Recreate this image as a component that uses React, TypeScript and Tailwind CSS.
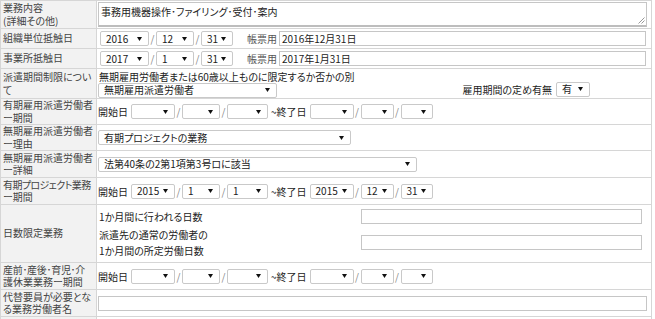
import React from "react";

type SelProps = { value?: string; w: string };

function Arrow() {
  return (
    <svg width="5" height="4" viewBox="0 0 5 4" className="shrink-0">
      <polygon points="0,0 5,0 2.5,4" fill="#111" />
    </svg>
  );
}

function Sel({ value = "", w }: SelProps) {
  return (
    <span
      className={`inline-flex h-[15px] shrink-0 items-center justify-between rounded-[2px] border border-[#c9c9c9] bg-white pl-[5px] pr-[6px] text-[10px] leading-none text-[#222] ${w}`}
    >
      <span className="whitespace-nowrap">{value}</span>
      <Arrow />
    </span>
  );
}

function Slash() {
  return <span className="w-[7px] shrink-0 text-center text-[10px] text-[#888]">/</span>;
}

function Field({ value = "", w }: { value?: string; w: string }) {
  return (
    <span
      className={`flex h-[15px] items-center border border-[#c6c6c6] bg-white pl-[2px] text-[10px] leading-none text-[#222] ${w}`}
    >
      {value}
    </span>
  );
}

function Range({ from = ["", "", ""], to = ["", "", ""] }: { from?: string[]; to?: string[] }) {
  return (
    <div className="flex items-center">
      <span className="mr-[3px] whitespace-nowrap">開始日</span>
      <Sel value={from[0]} w="w-[44px]" />
      <Slash />
      <Sel value={from[1]} w="w-[38px]" />
      <Slash />
      <Sel value={from[2]} w="w-[41px]" />
      <span className="mx-[3px] whitespace-nowrap">~終了日</span>
      <Sel value={to[0]} w="w-[44px]" />
      <Slash />
      <Sel value={to[1]} w="w-[33px]" />
      <Slash />
      <Sel value={to[2]} w="w-[32px]" />
    </div>
  );
}

function DateRow({ y, m, d, text }: { y: string; m: string; d: string; text: string }) {
  return (
    <div className="flex items-center pl-[2px]">
      <Sel value={y} w="w-[49px]" />
      <Slash />
      <Sel value={m} w="w-[38px]" />
      <Slash />
      <Sel value={d} w="w-[32px]" />
      <span className="ml-[14px] mr-[2px] whitespace-nowrap text-[#555]">帳票用</span>
      <Field value={text} w="w-[367px]" />
    </div>
  );
}

const label =
  "whitespace-nowrap border border-[#d6d6d6] bg-[#f2f2f2] px-[2px] align-middle leading-[12.5px] text-[#444]";
const cell = "border border-[#d6d6d6] bg-white pl-[1px] align-middle";

export default function App() {
  return (
    <div className="h-[319px] overflow-hidden bg-white font-['Noto_Sans_CJK_JP','Noto_Sans',sans-serif] text-[10px] leading-[13px] text-[#222] [font-feature-settings:'palt']">
      <table className="w-[652px] table-fixed border-collapse">
        <colgroup>
          <col className="w-[96px]" />
          <col />
        </colgroup>
        <tbody>
          <tr className="h-[28px]">
            <td className={label}>
              業務内容
              <br />
              (詳細その他)
            </td>
            <td className={cell}>
              <div className="relative h-[25px] w-[549px] border border-b-2 border-[#c6c6c6] border-b-[#bdbdbd] bg-white pl-[2px] pt-[2px]">
                事務用機器操作･ファイリング･受付･案内
                <svg width="7" height="7" viewBox="0 0 7 7" className="absolute bottom-[1px] right-[1px]">
                  <line x1="6.5" y1="0.5" x2="0.5" y2="6.5" stroke="#999" />
                  <line x1="6.5" y1="3.5" x2="3.5" y2="6.5" stroke="#999" />
                </svg>
              </div>
            </td>
          </tr>
          <tr className="h-[20px]">
            <td className={label}>組織単位抵触日</td>
            <td className={cell}>
              <DateRow y="2016" m="12" d="31" text="2016年12月31日" />
            </td>
          </tr>
          <tr className="h-[20px]">
            <td className={label}>事業所抵触日</td>
            <td className={cell}>
              <DateRow y="2017" m="1" d="31" text="2017年1月31日" />
            </td>
          </tr>
          <tr className="h-[30px]">
            <td className={label}>
              派遣期間制限につい
              <br />て
            </td>
            <td className={cell}>
              <div className="flex">
                <div>
                  <div className="whitespace-nowrap pl-[1px]">無期雇用労働者または60歳以上ものに限定するか否かの別</div>
                  <Sel value="無期雇用派遣労働者" w="w-[179px]" />
                </div>
                <div className="ml-auto mr-[61px] mt-[11px] flex items-center gap-[4px]">
                  <span className="whitespace-nowrap">雇用期間の定め有無</span>
                  <Sel value="有" w="w-[34px]" />
                </div>
              </div>
            </td>
          </tr>
          <tr className="h-[26px]">
            <td className={label}>
              有期雇用派遣労働者
              <br />
              ー期間
            </td>
            <td className={cell}>
              <Range />
            </td>
          </tr>
          <tr className="h-[26px]">
            <td className={label}>
              無期雇用派遣労働者
              <br />
              ー理由
            </td>
            <td className={cell}>
              <Sel value="有期プロジェクトの業務" w="w-[253px]" />
            </td>
          </tr>
          <tr className="h-[27px]">
            <td className={label}>
              無期雇用派遣労働者
              <br />
              ー詳細
            </td>
            <td className={cell}>
              <Sel value="法第40条の2第1項第3号ロに該当" w="w-[319px]" />
            </td>
          </tr>
          <tr className="h-[27px]">
            <td className={label}>
              <span className="tracking-[-0.6px]">有期プロジェクト業務</span>
              <br />
              ー期間
            </td>
            <td className={cell}>
              <Range from={["2015", "1", "1"]} to={["2015", "12", "31"]} />
            </td>
          </tr>
          <tr className="h-[58px]">
            <td className={label}>日数限定業務</td>
            <td className={cell}>
              <div className="flex flex-col gap-[3px] pl-[1px]">
                <div className="flex items-center">
                  <span className="w-[262px]">1か月間に行われる日数</span>
                  <Field w="w-[281px]" />
                </div>
                <div className="flex items-center leading-[16px]">
                  <span className="w-[262px]">
                    派遣先の通常の労働者の
                    <br />
                    1か月間の所定労働日数
                  </span>
                  <Field w="w-[281px]" />
                </div>
              </div>
            </td>
          </tr>
          <tr className="h-[27px]">
            <td className={label}>
              <span className="tracking-[-0.3px]">産前･産後･育児･介</span>
              <br />
              護休業業務ー期間
            </td>
            <td className={cell}>
              <Range />
            </td>
          </tr>
          <tr className="h-[27px]">
            <td className={label}>
              代替要員が必要とな
              <br />
              る業務労働者名
            </td>
            <td className={cell}>
              <Field w="w-[549px]" />
            </td>
          </tr>
          <tr className="h-[27px]">
            <td className={label}>&nbsp;</td>
            <td className={cell}>
              <Field w="w-[549px]" />
            </td>
          </tr>
        </tbody>
      </table>
    </div>
  );
}
